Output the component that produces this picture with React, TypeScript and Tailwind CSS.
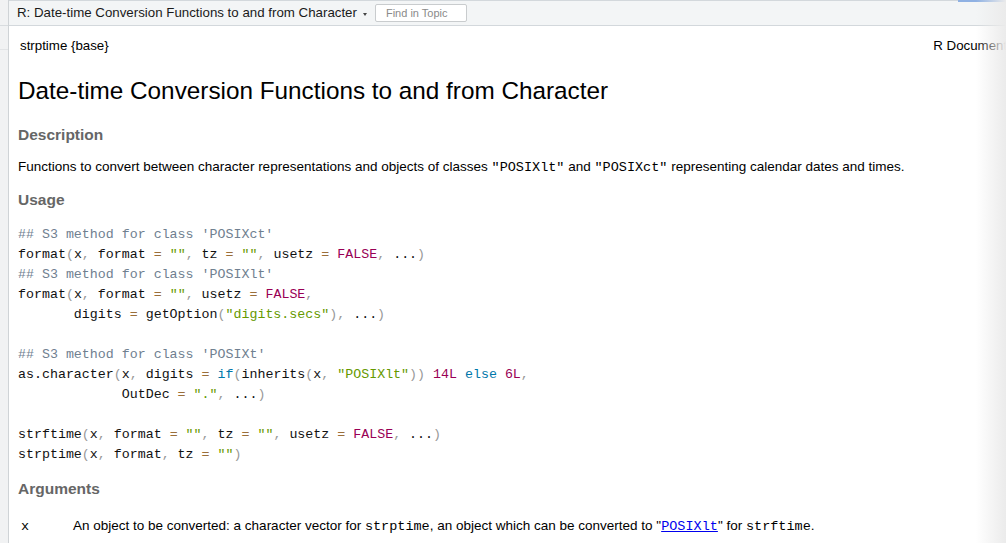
import React from "react";

type Tok = [string, string?];

// prism-like token colours
const c = {
  com: "text-[#708090]",
  op: "text-[#9a6e3a]",
  str: "text-[#669900]",
  num: "text-[#990055]",
  kw: "text-[#0077aa]",
  pun: "text-[#999999]",
};

const codeLines: Tok[][] = [
  [["## S3 method for class 'POSIXct'", c.com]],
  [
    ["format"], ["(", c.pun], ["x"], [",", c.pun], [" format "], ["=", c.op], [" "], ['""', c.str],
    [",", c.pun], [" tz "], ["=", c.op], [" "], ['""', c.str], [",", c.pun], [" usetz "], ["=", c.op],
    [" "], ["FALSE", c.num], [",", c.pun], [" ..."], [")", c.pun],
  ],
  [["## S3 method for class 'POSIXlt'", c.com]],
  [
    ["format"], ["(", c.pun], ["x"], [",", c.pun], [" format "], ["=", c.op], [" "], ['""', c.str],
    [",", c.pun], [" usetz "], ["=", c.op], [" "], ["FALSE", c.num], [",", c.pun],
  ],
  [
    ["       digits "], ["=", c.op], [" getOption"], ["(", c.pun], ['"digits.secs"', c.str],
    [")", c.pun], [",", c.pun], [" ..."], [")", c.pun],
  ],
  [[" "]],
  [["## S3 method for class 'POSIXt'", c.com]],
  [
    ["as.character"], ["(", c.pun], ["x"], [",", c.pun], [" digits "], ["=", c.op], [" "], ["if", c.kw],
    ["(", c.pun], ["inherits"], ["(", c.pun], ["x"], [",", c.pun], [" "], ['"POSIXlt"', c.str],
    ["))", c.pun], [" "], ["14L", c.num], [" "], ["else", c.kw], [" "], ["6L", c.num], [",", c.pun],
  ],
  [
    ["             OutDec "], ["=", c.op], [" "], ['"."', c.str], [",", c.pun], [" ..."], [")", c.pun],
  ],
  [[" "]],
  [
    ["strftime"], ["(", c.pun], ["x"], [",", c.pun], [" format "], ["=", c.op], [" "], ['""', c.str],
    [",", c.pun], [" tz "], ["=", c.op], [" "], ['""', c.str], [",", c.pun], [" usetz "], ["=", c.op],
    [" "], ["FALSE", c.num], [",", c.pun], [" ..."], [")", c.pun],
  ],
  [
    ["strptime"], ["(", c.pun], ["x"], [",", c.pun], [" format"], [",", c.pun], [" tz "], ["=", c.op],
    [" "], ['""', c.str], [")", c.pun],
  ],
];

function Code({ children }: { children: React.ReactNode }) {
  return <code className="font-['Liberation_Mono',monospace] text-[13.5px]">{children}</code>;
}

function SectionTitle({ children, className }: { children: React.ReactNode; className: string }) {
  return (
    <h3 className={`text-[15.5px] font-bold leading-[20px] text-[#666666] ${className}`}>{children}</h3>
  );
}

export default function App() {
  return (
    <div className="relative flex h-[543px] w-[1006px] overflow-hidden bg-white font-['Liberation_Sans',Arial,sans-serif] text-black">
      {/* left pane edge */}
      <div className="flex w-[9px] shrink-0 flex-col border-r border-[#cfd3d6] bg-[#f1f2f3]">
        <div className="h-[26px] border-b border-[#d8dcdf]" />
        <div className="h-[24px] border-b border-[#e2e4e6]" />
      </div>

      <div className="flex min-w-0 flex-1 flex-col">
        {/* toolbar */}
        <div className="flex h-[26px] shrink-0 items-center border-t border-b border-[#d3d8dc] bg-[#f3f5f6] pl-[8px]">
          <span className="text-[13.3px] leading-none text-[#1a1a1a]">
            R: Date-time Conversion Functions to and from Character
          </span>
          <span className="ml-[6px] mt-[2px] h-0 w-0 border-x-[2.5px] border-t-[3px] border-x-transparent border-t-[#444]" />
          <div className="ml-[8px] flex h-[18px] w-[92px] items-center rounded-[2px] border border-[#c9ccce] bg-white pl-[10px] text-[11px] text-[#8a8a8a]">
            Find in Topic
          </div>
        </div>

        {/* help page */}
        <div className="flex-1 overflow-hidden pl-[9px]">
          <div className="flex h-[40px] w-[1018px] items-center justify-between pl-[2px] text-[13.3px]">
            <span>strptime {"{base}"}</span>
            <span>R Documentation</span>
          </div>

          <h2 className="mt-[10px] whitespace-nowrap text-[24.3px] font-normal leading-[30px]">
            Date-time Conversion Functions to and from Character
          </h2>

          <SectionTitle className="mt-[19px]">Description</SectionTitle>
          <p className="mt-[12px] whitespace-nowrap text-[13.5px] leading-[20px]">
            Functions to convert between character representations and objects of classes{" "}
            <Code>"POSIXlt"</Code> and <Code>"POSIXct"</Code> representing calendar dates and times.
          </p>

          <SectionTitle className="mt-[12px]">Usage</SectionTitle>
          <pre className="mt-[15px] font-['Liberation_Mono',monospace] text-[13.3px] leading-[20px] text-[#111]">
            {codeLines.map((line, i) => (
              <div key={i} className="whitespace-pre">
                {line.map(([t, cls], j) => (
                  <span key={j} className={cls}>
                    {t}
                  </span>
                ))}
              </div>
            ))}
          </pre>

          <SectionTitle className="mt-[14px]">Arguments</SectionTitle>
          <div className="mt-[17px] flex whitespace-nowrap text-[13.5px] leading-[20px]">
            <div className="w-[55px] shrink-0 pl-[3px]">
              <Code>x</Code>
            </div>
            <div>
              An object to be converted: a character vector for <Code>strptime</Code>, an object which can be
              converted to "
              <a className="text-[#0000ee] underline">
                <Code>POSIXlt</Code>
              </a>
              " for <Code>strftime</Code>.
            </div>
          </div>
        </div>
      </div>

      {/* overlays: active tab marker and scroll shadow */}
      <div className="absolute right-0 top-0 h-[2px] w-[48px] bg-[#8fb1e3]" />
      <div className="pointer-events-none absolute bottom-0 right-0 top-0 w-[30px] bg-linear-to-r from-white/0 to-[#ebebeb]" />
    </div>
  );
}
